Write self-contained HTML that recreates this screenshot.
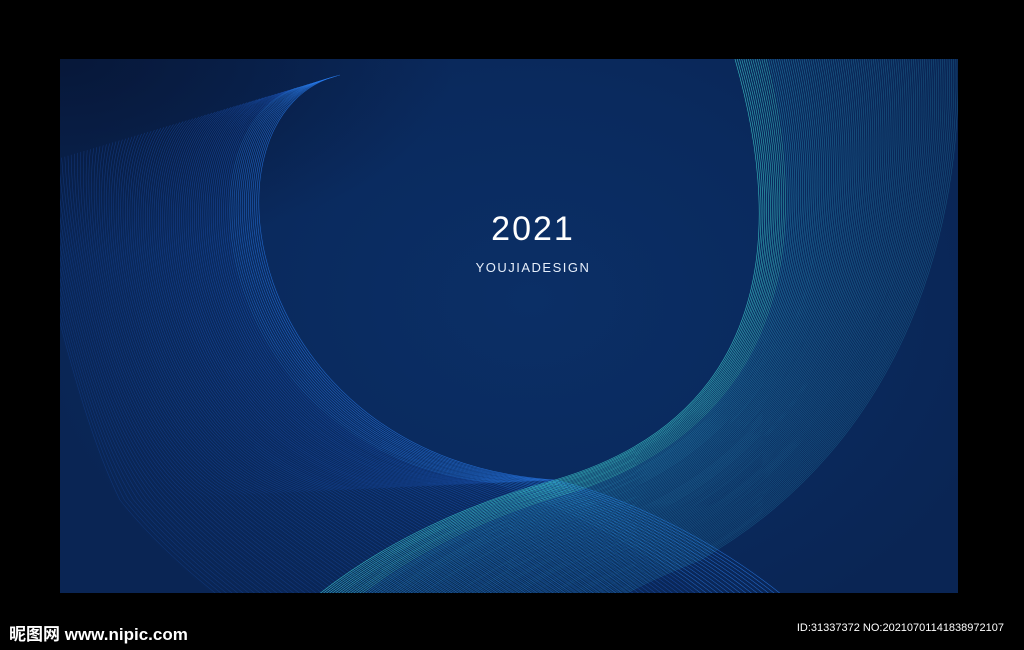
<!DOCTYPE html>
<html><head><meta charset="utf-8"><style>
html,body{margin:0;padding:0;background:#000;width:1024px;height:650px;overflow:hidden;font-family:"Liberation Sans","Noto Sans CJK SC",sans-serif}
#panel{position:absolute;left:60px;top:59px;width:898px;height:534px;overflow:hidden;background:radial-gradient(ellipse 500px 380px at 470px 240px,#0b2f66 0%,#0a2a5e 55%,#0a2554 100%)}
#panel:before{content:"";position:absolute;left:0;top:0;width:400px;height:200px;background:radial-gradient(ellipse at 0 0,rgba(6,20,50,0.8),rgba(6,20,50,0) 70%)}
svg{position:absolute;left:0;top:0}
.t1{position:absolute;width:1066px;text-align:center;color:#fff;font-size:34px;letter-spacing:2px}
.t2{position:absolute;width:1066px;text-align:center;color:#e6eefa;font-size:13px;letter-spacing:1.5px}
.wm{position:absolute;left:9px;top:620px;color:#fff;font-size:17px;font-weight:bold}
.id{position:absolute;right:20px;top:622px;color:#fff;font-size:11px}
</style></head><body>
<div id="panel"><svg id="s" width="898" height="534" viewBox="60 59 898 534">
<g id="g"></g></svg>
<div class="t1" style="left:-60px;top:151px">2021</div>
<div class="t2" style="left:-60px;top:201px">YOUJIADESIGN</div>
</div>
<div class="wm">昵图网 www.nipic.com</div>
<div class="id">ID:31337372 NO:20210701141838972107</div>
<script>
var g=document.getElementById('g'),h='';
function L(a,b,t){return a+(b-a)*t}
function fam(A,B,n,c1,c2,o1,o2,w){for(var i=0;i<=n;i++){var t=i/n,p=[];for(var k=0;k<A.length;k++)p.push(L(A[k],B[k],t).toFixed(1));
var col=t<0.15?c1:c2,op=L(o1,o2,Math.sqrt(t));
h+='<path d="M'+p[0]+' '+p[1]+'C'+p[2]+' '+p[3]+' '+p[4]+' '+p[5]+' '+p[6]+' '+p[7]+'C'+p[8]+' '+p[9]+' '+p[10]+' '+p[11]+' '+p[12]+' '+p[13]+'" fill="none" stroke="'+col+'" stroke-opacity="'+op.toFixed(2)+'" stroke-width="'+w+'"/>';}}
// left family
fam([340,75,190,110,240,460,555,480,620,495,720,540,800,610],
    [20,170,50,280,80,420,120,500,160,550,210,590,250,620],100,'#2a7ef0','#1f5cc8',0.75,0.3,0.6);
// right family
fam([735,59,790,250,760,420,555,480,480,500,380,540,300,610],
    [958,59,962,220,910,440,700,560,650,580,620,595,600,610],100,'#45e0d8','#2e9ec4',0.8,0.35,0.6);
g.innerHTML=h;
</script>
</body></html>
